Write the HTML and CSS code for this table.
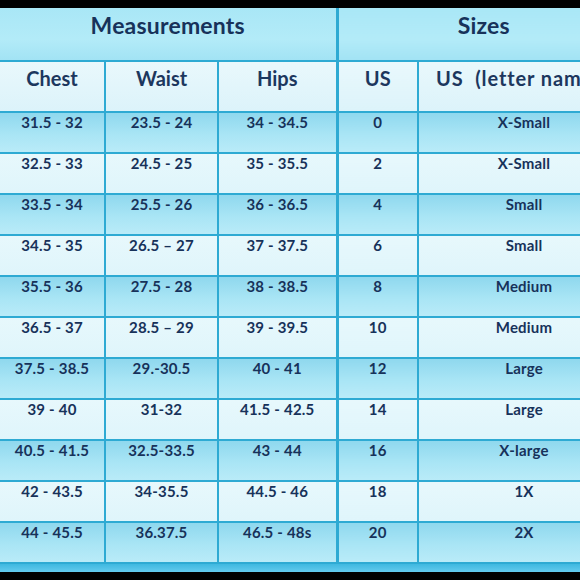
FILE: index.html
```html
<!DOCTYPE html>
<html>
<head>
<meta charset="utf-8">
<link rel="stylesheet" href="styles.css">
</head>
<body>
<div class="frame">
  <div class="sheet">
    <table class="chart">
      <colgroup>
        <col class="c1"><col class="c2"><col class="c3"><col class="c4"><col class="c5">
      </colgroup>
      <thead>
        <tr class="group">
          <th colspan="3" class="split">Measurements</th>
          <th colspan="2">Sizes</th>
        </tr>
        <tr class="heads">
          <th>Chest</th><th>Waist</th><th class="split">Hips</th><th>US</th><th class="wide">US&nbsp; (letter names)</th>
        </tr>
      </thead>
      <tbody>
        <tr class="dark"><td>31.5 - 32</td><td>23.5 - 24</td><td class="split">34 - 34.5</td><td>0</td><td>X-Small</td></tr>
        <tr class="light"><td>32.5 - 33</td><td>24.5 - 25</td><td class="split">35 - 35.5</td><td>2</td><td>X-Small</td></tr>
        <tr class="dark"><td>33.5 - 34</td><td>25.5 - 26</td><td class="split">36 - 36.5</td><td>4</td><td>Small</td></tr>
        <tr class="light"><td>34.5 - 35</td><td>26.5 – 27</td><td class="split">37 - 37.5</td><td>6</td><td>Small</td></tr>
        <tr class="dark"><td>35.5 - 36</td><td>27.5 - 28</td><td class="split">38 - 38.5</td><td>8</td><td>Medium</td></tr>
        <tr class="light"><td>36.5 - 37</td><td>28.5 – 29</td><td class="split">39 - 39.5</td><td>10</td><td>Medium</td></tr>
        <tr class="dark"><td>37.5 - 38.5</td><td>29.-30.5</td><td class="split">40 - 41</td><td>12</td><td>Large</td></tr>
        <tr class="light"><td>39 - 40</td><td>31-32</td><td class="split">41.5 - 42.5</td><td>14</td><td>Large</td></tr>
        <tr class="dark"><td>40.5 - 41.5</td><td>32.5-33.5</td><td class="split">43 - 44</td><td>16</td><td>X-large</td></tr>
        <tr class="light"><td>42 - 43.5</td><td>34-35.5</td><td class="split">44.5 - 46</td><td>18</td><td>1X</td></tr>
        <tr class="dark"><td>44 - 45.5</td><td>36.37.5</td><td class="split">46.5 - 48s</td><td>20</td><td>2X</td></tr>
      </tbody>
    </table>
    <div class="base"></div>
  </div>
</div>
</body>
</html>
```

FILE: styles.css
```css
html, body {
  margin: 0;
  padding: 0;
  background: #000;
}

.frame {
  width: 580px;
  height: 580px;
  overflow: hidden;
  background: #000;
  padding-top: 8px;
  box-sizing: border-box;
}

.sheet {
  width: 640px;
}

.chart {
  width: 630px;
  table-layout: fixed;
  border-collapse: collapse;
  font-family: Lato, "Open Sans", sans-serif;
  font-weight: 700;
  color: #17325a;
  text-align: center;
}

.c1 { width: 105px; }
.c2 { width: 113px; }
.c3 { width: 119px; }
.c4 { width: 81px; }
.c5 { width: 212px; }

.chart th,
.chart td {
  border: 2px solid #2eaad3;
  padding: 0;
  vertical-align: top;
}

.chart tr > :first-child {
  border-left: none;
}

.chart .split {
  border-right-width: 3px;
}

.group th {
  height: 53px;
  border-top: none;
  background: linear-gradient(180deg, #a9e7f6 0%, #b3ebf8 60%, #a2e3f4 100%);
  font-size: 23px;
  line-height: 26px;
  padding-top: 4px;
  box-sizing: border-box;
  letter-spacing: 0.2px;
}

.heads th {
  height: 51px;
  background: linear-gradient(180deg, #e9f8fc 0%, #dcf3fa 100%);
  font-size: 20px;
  line-height: 22px;
  padding-top: 5px;
  font-weight: 700;
  color: #1c375e;
  box-sizing: border-box;
}

.heads .wide {
  text-align: left;
  padding-left: 17px;
  white-space: nowrap;
  letter-spacing: 0.9px;
}

tbody td {
  height: 41px;
  font-size: 15px;
  line-height: 18px;
  padding-top: 9px;
  box-sizing: border-box;
  letter-spacing: 0.2px;
}

tbody tr.dark td {
  background: linear-gradient(180deg, #8fd8ee 0%, #a9e5f5 55%, #b9ebf8 100%);
}

tbody tr.light td {
  background: linear-gradient(180deg, #e7f8fc 0%, #dff5fb 100%);
}

tbody tr:last-child td {
  border-bottom: 2px solid #2eaad3;
}

.base {
  height: 8px;
  background: linear-gradient(180deg, #3fb8e0 0%, #63cbee 100%);
}
```
